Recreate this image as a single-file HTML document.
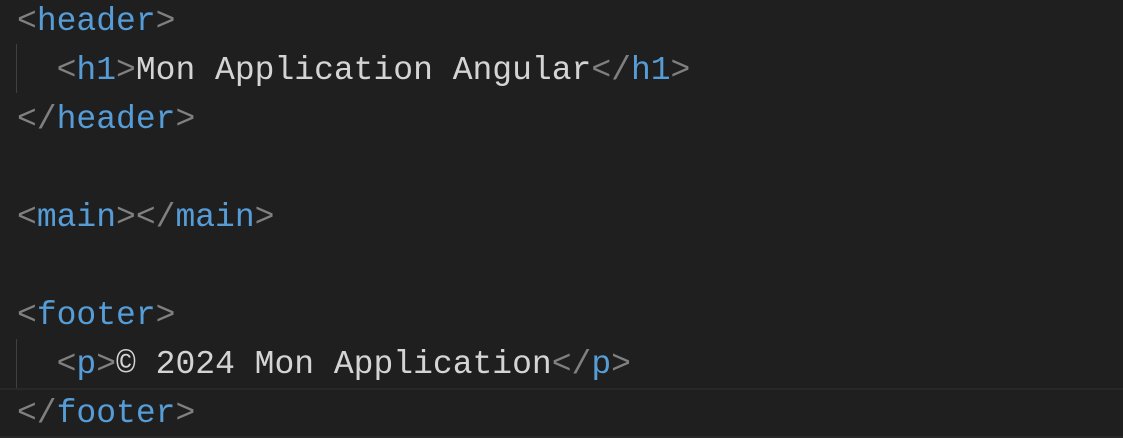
<!DOCTYPE html>
<html><head><style>
html,body{margin:0;padding:0;background:#1f1f1f;width:1123px;height:436px;overflow:hidden}
.c{position:absolute;left:17px;top:-3px;font-family:"Liberation Mono",monospace;font-size:33px;line-height:49px;color:#d4d4d4;white-space:pre}
.b{color:#808080}.t{color:#569cd6}
.g{position:absolute;left:16px;width:1px;background:#404040}
.cur{position:absolute;left:0;top:388px;width:1123px;height:46px;border-top:2px solid #282828;border-bottom:2px solid #282828}
</style></head><body>
<div class="cur"></div>
<div class="g" style="top:44px;height:49px"></div>
<div class="g" style="top:339px;height:49px"></div>
<div class="c"><span class="b">&lt;</span><span class="t">header</span><span class="b">&gt;</span>
  <span class="b">&lt;</span><span class="t">h1</span><span class="b">&gt;</span>Mon Application Angular<span class="b">&lt;/</span><span class="t">h1</span><span class="b">&gt;</span>
<span class="b">&lt;/</span><span class="t">header</span><span class="b">&gt;</span>

<span class="b">&lt;</span><span class="t">main</span><span class="b">&gt;&lt;/</span><span class="t">main</span><span class="b">&gt;</span>

<span class="b">&lt;</span><span class="t">footer</span><span class="b">&gt;</span>
  <span class="b">&lt;</span><span class="t">p</span><span class="b">&gt;</span>© 2024 Mon Application<span class="b">&lt;/</span><span class="t">p</span><span class="b">&gt;</span>
<span class="b">&lt;/</span><span class="t">footer</span><span class="b">&gt;</span></div>
</body></html>
